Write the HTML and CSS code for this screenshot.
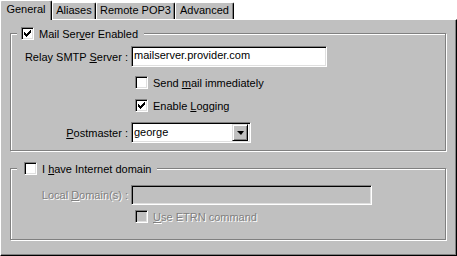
FILE: index.html
```html
<!DOCTYPE html>
<html lang="en">
<head>
<meta charset="UTF-8">
<title>Mail Server Properties</title>
<link rel="stylesheet" href="styles.css">
</head>
<body>

<div class="sheet">
    <div class="tabs">
        <div class="tab tab-general active">General</div>
        <div class="tab tab-aliases">Aliases</div>
        <div class="tab tab-pop3">Remote POP3</div>
        <div class="tab tab-advanced">Advanced</div>
    </div>

    <div class="panel">
        <div class="group group-mail">
            <div class="legend">
                <span class="check checked"></span>
                <span>Mail Ser<u>v</u>er Enabled</span>
            </div>
            <div class="row row-first">
                <span class="caption">Relay SMTP <u>S</u>erver :</span>
                <div class="field field-relay">mailserver.provider.com</div>
            </div>
            <div class="option option-send">
                <span class="check"></span>
                <span>Send <u>m</u>ail immediately</span>
            </div>
            <div class="option option-log">
                <span class="check checked"></span>
                <span>Enable <u>L</u>ogging</span>
            </div>
            <div class="row row-postmaster">
                <span class="caption"><u>P</u>ostmaster :</span>
                <div class="field combo">
                    <span class="combo-text">george</span>
                    <span class="combo-btn"><span class="arrow"></span></span>
                </div>
            </div>
        </div>

        <div class="group group-domain">
            <div class="legend legend-domain">
                <span class="check"></span>
                <span>I <u>h</u>ave Internet domain</span>
            </div>
            <div class="row row-local disabled">
                <span class="caption">Local <u>D</u>omain(s) :</span>
                <div class="field field-local"></div>
            </div>
            <div class="option option-etrn disabled">
                <span class="check"></span>
                <span><u>U</u>se ETRN command</span>
            </div>
        </div>
    </div>
</div>

</body>
</html>
```

FILE: styles.css
```css
body {
    margin: 0;
    background-color: #fff;
    font-family: "Liberation Sans", Arial, sans-serif;
    font-size: 11px;
    color: #000;
}
u {
    text-decoration: underline;
    text-underline-offset: 1px;
}
.sheet {
    width: 457px;
    height: 256px;
}

/* tabs */
.tabs {
    display: flex;
    align-items: flex-end;
    height: 19px;
}
.tab {
    box-sizing: border-box;
    height: 17px;
    padding-top: 1px;
    text-align: center;
    line-height: 13px;
    background-color: #c0c0c0;
    border-top: 1px solid #fff;
    border-left: 1px solid #fff;
    border-right: 1px solid #000;
    border-radius: 2px 2px 0 0;
    box-shadow: inset -1px 0 0 #808080;
}
.tab.active {
    height: 20px;
    margin-bottom: -1px;
    padding-top: 2px;
    position: relative;
    z-index: 1;
}
.tab-general { width: 52px; }
.tab-aliases { width: 44px; }
.tab-pop3 { width: 79px; }
.tab-advanced { width: 59px; }

/* page */
.panel {
    box-sizing: border-box;
    height: 237px;
    padding: 13px 10px 0 9px;
    background-color: #c0c0c0;
    border-top: 1px solid #fff;
    border-left: 1px solid #fff;
    border-right: 1px solid #000;
    border-bottom: 1px solid #000;
    box-shadow: inset -1px -1px 0 #808080;
}
.group {
    border: 1px solid #808080;
    box-shadow: inset 1px 1px 0 #fff, 1px 1px 0 #fff;
}
.group-mail {
    padding-bottom: 7px;
}
.group-domain {
    margin-top: 17px;
    padding-bottom: 16px;
}
.legend {
    display: flex;
    align-items: center;
    gap: 5px;
    width: fit-content;
    height: 13px;
    margin: -7px 0 0 6px;
    padding: 0 6px 0 4px;
    background-color: #c0c0c0;
}
.legend-domain {
    padding-left: 7px;
}

/* checkbox */
.check {
    box-sizing: border-box;
    display: inline-block;
    flex: none;
    width: 13px;
    height: 13px;
    background-color: #fff;
    border: 1px solid;
    border-color: #808080 #fff #fff #808080;
    box-shadow: inset 1px 1px 0 #000, inset -1px -1px 0 #dfdfdf;
}
.check.checked {
    background: #fff url("data:image/svg+xml,%3Csvg xmlns='http://www.w3.org/2000/svg' width='7' height='7' shape-rendering='crispEdges'%3E%3Cpath d='M0 2H1V3H2V4H3V3H4V2H5V1H6V0H7V3H6V4H5V5H4V6H3V7H2V6H1V5H0Z'/%3E%3C/svg%3E") no-repeat 2px 2px;
}
.disabled .check {
    background-color: #c0c0c0;
}
.option {
    display: flex;
    align-items: center;
    gap: 5px;
    height: 13px;
    padding-left: 124px;
}
.option-send { margin-top: 9px; }
.option-log { margin-top: 10px; }
.option-etrn { margin-top: 5px; }

/* label + field rows */
.row {
    display: flex;
    align-items: center;
}
.row-first { margin-top: 6px; }
.row-postmaster { margin-top: 10px; }
.row-local { margin-top: 10px; }
.caption {
    width: 117px;
    margin-right: 3px;
    text-align: right;
    white-space: nowrap;
}
.disabled .caption,
.disabled .check + span {
    color: #808080;
    text-shadow: 1px 1px 0 #fff;
}
.field {
    box-sizing: border-box;
    height: 21px;
    padding-left: 2px;
    line-height: 17px;
    background-color: #fff;
    border: 1px solid;
    border-color: #808080 #fff #fff #808080;
    box-shadow: inset 1px 1px 0 #000, inset -1px -1px 0 #dfdfdf;
}
.field-relay { width: 196px; }
.field-local {
    width: 241px;
    height: 20px;
    background-color: #c0c0c0;
}

/* combo box */
.combo {
    display: flex;
    align-items: center;
    width: 120px;
    padding-right: 2px;
}
.combo-text {
    flex: 1;
}
.combo-btn {
    box-sizing: border-box;
    display: flex;
    align-items: center;
    justify-content: center;
    width: 16px;
    height: 17px;
    background-color: #c0c0c0;
    border: 1px solid;
    border-color: #dfdfdf #000 #000 #dfdfdf;
    box-shadow: inset 1px 1px 0 #fff, inset -1px -1px 0 #808080;
}
.arrow {
    width: 0;
    height: 0;
    border-left: 4px solid transparent;
    border-right: 3px solid transparent;
    border-top: 4px solid #000;
}
```
